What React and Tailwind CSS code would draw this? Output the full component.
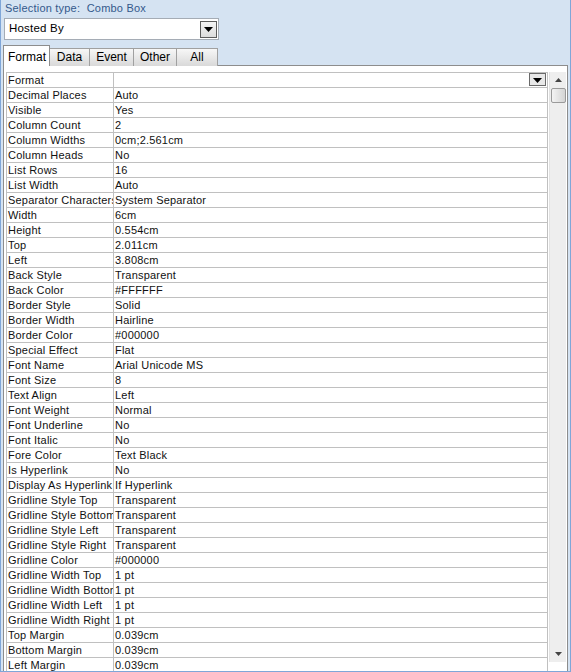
import React from "react";

const rows = [
  ["Format", ""],
  ["Decimal Places", "Auto"],
  ["Visible", "Yes"],
  ["Column Count", "2"],
  ["Column Widths", "0cm;2.561cm"],
  ["Column Heads", "No"],
  ["List Rows", "16"],
  ["List Width", "Auto"],
  ["Separator Characters", "System Separator"],
  ["Width", "6cm"],
  ["Height", "0.554cm"],
  ["Top", "2.011cm"],
  ["Left", "3.808cm"],
  ["Back Style", "Transparent"],
  ["Back Color", "#FFFFFF"],
  ["Border Style", "Solid"],
  ["Border Width", "Hairline"],
  ["Border Color", "#000000"],
  ["Special Effect", "Flat"],
  ["Font Name", "Arial Unicode MS"],
  ["Font Size", "8"],
  ["Text Align", "Left"],
  ["Font Weight", "Normal"],
  ["Font Underline", "No"],
  ["Font Italic", "No"],
  ["Fore Color", "Text Black"],
  ["Is Hyperlink", "No"],
  ["Display As Hyperlink", "If Hyperlink"],
  ["Gridline Style Top", "Transparent"],
  ["Gridline Style Bottom", "Transparent"],
  ["Gridline Style Left", "Transparent"],
  ["Gridline Style Right", "Transparent"],
  ["Gridline Color", "#000000"],
  ["Gridline Width Top", "1 pt"],
  ["Gridline Width Bottom", "1 pt"],
  ["Gridline Width Left", "1 pt"],
  ["Gridline Width Right", "1 pt"],
  ["Top Margin", "0.039cm"],
  ["Bottom Margin", "0.039cm"],
  ["Left Margin", "0.039cm"],
];

const tabs = [
  ["Data", "w-[40px]"],
  ["Event", "w-[44px]"],
  ["Other", "w-[43px]"],
  ["All", "w-[41px]"],
];

function DownTriangle() {
  return (
    <svg width="9" height="5" viewBox="0 0 9 5">
      <path d="M0 0h9L4.5 5z" fill="#000" />
    </svg>
  );
}

export default function App() {
  return (
    <div
      className="w-[571px] h-[672px] overflow-hidden bg-[#d5e3f2] border-l border-r border-b border-[#7fa6d8] text-[11px] tracking-[0.2px] text-[#111]"
      style={{ fontFamily: '"Liberation Sans", Arial, sans-serif' }}
    >
      {/* header */}
      <div className="h-[18px] pl-[4px] pt-[1px] text-[#34598c] leading-[14px]">
        Selection type:&nbsp;&nbsp;Combo Box
      </div>

      {/* combo */}
      <div className="ml-[3px] w-[215px] h-[22px] bg-white border border-[#a5acb5] flex items-center justify-between pl-[4px] pr-[1px]">
        <span className="text-[11.5px] text-black">Hosted By</span>
        <div className="w-[17px] h-[17px] border border-[#5c5c5c] bg-gradient-to-b from-[#f4f4f4] to-[#dcdcdc] flex items-center justify-center">
          <DownTriangle />
        </div>
      </div>

      {/* tabs */}
      <div className="flex items-end ml-[2px] mt-[6px] h-[20px]">
        <div className="relative z-10 w-[47px] h-[21px] bg-white border border-b-0 border-[#8d8d8d] pl-[4px] pt-[2px] text-[12px] tracking-normal text-black">
          Format
        </div>
        {tabs.map(([t, w]) => (
          <div
            key={t}
            className={`${w} h-[18px] border border-l-0 border-b-0 border-[#a0a0a0] bg-gradient-to-b from-[#f7f7f7] to-[#d9d9d9] text-center text-[12px] tracking-normal leading-[17px] text-black`}
          >
            {t}
          </div>
        ))}
      </div>

      {/* panel */}
      <div className="ml-[2px] w-[565px] h-[610px] bg-white border border-[#8d8d8d] -mt-[1px] pt-[6px] pl-[2px] flex">
        <div className="w-[542px] border-l border-r border-t border-[#c0c0c0] self-start">
          {rows.map(([k, v], i) => (
            <div key={i} className="flex h-[15px] border-b border-[#c0c0c0]">
              <div className="w-[107px] border-r border-[#c0c0c0] pl-[1px] leading-[14px] whitespace-nowrap overflow-hidden">
                {k}
              </div>
              <div className="flex-1 pl-[1px] leading-[14px] whitespace-nowrap overflow-hidden flex justify-between">
                <span>{v}</span>
                {i === 0 && (
                  <div className="w-[17px] h-[13px] mr-[1px] border border-[#6a6a6a] bg-[#e8e8e8] flex items-end justify-center pb-[2px]">
                    <DownTriangle />
                  </div>
                )}
              </div>
            </div>
          ))}
        </div>

        {/* scrollbar */}
        <div className="ml-[1px] w-[17px] h-[590px] bg-[#eeeeee] border-l border-[#e2e2e2] flex flex-col items-center">
          <div className="h-[16px] flex items-center justify-center">
            <svg width="7" height="4" viewBox="0 0 7 4">
              <path d="M0 4h7L3.5 0z" fill="#444" />
            </svg>
          </div>
          <div className="w-[15px] h-[15px] rounded-[2px] border border-[#9a9a9a] bg-gradient-to-r from-[#f3f3f3] to-[#d4d4d4]" />
          <div className="flex-1" />
          <div className="h-[16px] flex items-center justify-center">
            <svg width="7" height="4" viewBox="0 0 7 4">
              <path d="M0 0h7L3.5 4z" fill="#444" />
            </svg>
          </div>
        </div>
      </div>
    </div>
  );
}
